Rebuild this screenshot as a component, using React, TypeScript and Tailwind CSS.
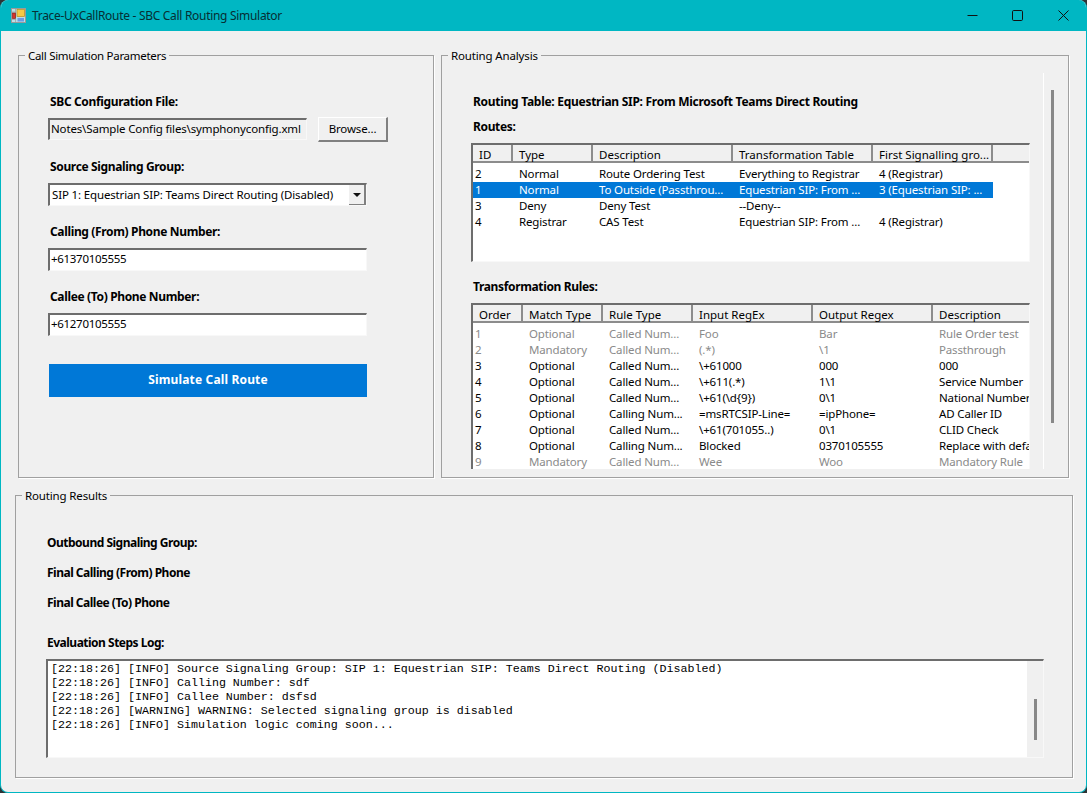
import React from 'react';

const sunken = 'border-t-2 border-l-2 border-b border-r border-t-[#6d6d6d] border-l-[#6d6d6d] border-b-[#f8f8f8] border-r-[#f8f8f8]';
const routeCols = ['w-[40px]', 'w-[80px]', 'w-[140px]', 'w-[140px]', 'w-[120px]'];
const ruleCols = ['w-[50px]', 'w-[80px]', 'w-[90px]', 'w-[120px]', 'w-[120px]', 'w-[120px]'];

const routes = [
  ['2', 'Normal', 'Route Ordering Test', 'Everything to Registrar', '4 (Registrar)'],
  ['1', 'Normal', 'To Outside (Passthrou...', 'Equestrian SIP: From ...', '3 (Equestrian SIP: ...'],
  ['3', 'Deny', 'Deny Test', '--Deny--', ''],
  ['4', 'Registrar', 'CAS Test', 'Equestrian SIP: From ...', '4 (Registrar)'],
];

const rules = [
  ['1', 'Optional', 'Called Num...', 'Foo', 'Bar', 'Rule Order test'],
  ['2', 'Mandatory', 'Called Num...', '(.*)', '\\1', 'Passthrough'],
  ['3', 'Optional', 'Called Num...', '\\+61000', '000', '000'],
  ['4', 'Optional', 'Called Num...', '\\+611(.*)', '1\\1', 'Service Number'],
  ['5', 'Optional', 'Called Num...', '\\+61(\\d{9})', '0\\1', 'National Number'],
  ['6', 'Optional', 'Calling Num...', '=msRTCSIP-Line=', '=ipPhone=', 'AD Caller ID'],
  ['7', 'Optional', 'Called Num...', '\\+61(701055..)', '0\\1', 'CLID Check'],
  ['8', 'Optional', 'Calling Num...', 'Blocked', '0370105555', 'Replace with default'],
  ['9', 'Mandatory', 'Called Num...', 'Wee', 'Woo', 'Mandatory Rule'],
];

const logLines = [
  '[22:18:26] [INFO] Source Signaling Group: SIP 1: Equestrian SIP: Teams Direct Routing (Disabled)',
  '[22:18:26] [INFO] Calling Number: sdf',
  '[22:18:26] [INFO] Callee Number: dsfsd',
  '[22:18:26] [WARNING] WARNING: Selected signaling group is disabled',
  '[22:18:26] [INFO] Simulation logic coming soon...',
];

const GroupBox = ({ title, titleClass = '', className, children }: { title: string; titleClass?: string; className: string; children: React.ReactNode }) => (
  <div className={`relative border border-[#a0a0a0] shadow-[1px_1px_0_#ffffff] ${className}`}>
    <span className={`absolute -top-[8px] left-[6px] h-4 bg-[#f0f0f0] px-[3px] leading-4 whitespace-nowrap ${titleClass}`}>{title}</span>
    {children}
  </div>
);

const Label = ({ children, className = 'tracking-[-0.35px]' }: { children: React.ReactNode; className?: string }) => (
  <div className={`h-4 text-[12px] font-bold leading-4 whitespace-nowrap ${className}`}>{children}</div>
);

const HeaderRow = ({ labels, cols }: { labels: string[]; cols: string[] }) => (
  <div className="flex h-[18px] w-max bg-[#f0f0f0]">
    {labels.map((label, index) => (
      <div
        key={label}
        className={`${cols[index]} h-[18px] shrink-0 overflow-x-clip border-r-2 border-b-2 border-r-[#8c8c8c] border-b-[#8c8c8c] pl-[6px] leading-[19px] tracking-normal whitespace-nowrap`}
      >
        {label}
      </div>
    ))}
  </div>
);

const Row = ({ cells, cols, selected, muted }: { cells: string[]; cols: string[]; selected?: boolean; muted?: boolean }) => (
  <div className={`flex h-4 w-max ${selected ? 'bg-[#0078d7] text-white' : ''} ${muted ? 'text-[#8a8a8a]' : ''}`}>
    {cells.map((cell, index) => (
      <div
        key={index}
        className={`${cols[index]} shrink-0 overflow-hidden leading-4 whitespace-nowrap ${index === 0 ? 'pl-[2px]' : 'pl-[6px]'}`}
      >
        {cell}
      </div>
    ))}
  </div>
);

const AppIcon = () => (
  <svg width="15" height="15" viewBox="0 0 15 15" className="shrink-0">
    <rect x="0.5" y="0.5" width="14" height="14" fill="#bcdfe6" stroke="#9a9a9a" />
    <path d="M0.5 4h4M4.5 0.5v14M0.5 11.5h4" stroke="#9a9a9a" strokeWidth="0.7" fill="none" />
    <rect x="6" y="1.5" width="7.5" height="7" fill="#f6c945" stroke="#b98a1a" strokeWidth="0.7" />
    <rect x="1.5" y="5" width="3" height="5.5" fill="#d8322a" stroke="#7a1a14" strokeWidth="0.6" />
    <rect x="6.5" y="10" width="6.5" height="3.5" fill="#6a9be6" />
  </svg>
);

export default function App() {
  return (
    <div className="h-[793px] w-[1087px] overflow-hidden bg-[#2e3436] font-['Noto_Sans',sans-serif] text-[11.5px] tracking-[-0.15px] text-black">
      <div className="flex h-full flex-col overflow-hidden rounded-[8px] border-r border-b border-l border-[#00b7c3] bg-[#f0f0f0]">
        {/* Title bar */}
        <div className="flex h-[31px] shrink-0 items-center bg-[#00b7c3] pl-[10px]">
          <AppIcon />
          <span className="ml-[6px] text-[12px] tracking-[-0.3px] text-[#062f33]">Trace-UxCallRoute - SBC Call Routing Simulator</span>
          <div className="ml-auto flex">
            <div className="flex h-[31px] w-[45px] items-center justify-center">
              <svg width="11" height="11" viewBox="0 0 11 11"><path d="M0.5 5.5h10" stroke="#111" strokeWidth="1" fill="none" /></svg>
            </div>
            <div className="flex h-[31px] w-[45px] items-center justify-center">
              <svg width="11" height="11" viewBox="0 0 11 11"><rect x="0.5" y="0.5" width="10" height="10" rx="1.2" stroke="#111" fill="none" /></svg>
            </div>
            <div className="flex h-[31px] w-[46px] items-center justify-center">
              <svg width="11" height="11" viewBox="0 0 11 11"><path d="M0.5 0.5l10 10M10.5 0.5l-10 10" stroke="#111" fill="none" /></svg>
            </div>
          </div>
        </div>

        <div className="flex flex-col pt-[24px]">
          <div className="flex">
            {/* Call Simulation Parameters */}
            <GroupBox title="Call Simulation Parameters" titleClass="tracking-[-0.3px]" className="ml-[17px] h-[423px] w-[416px] pt-[38px] pl-[29px]">
              <div className="ml-[2px]"><Label>SBC Configuration File:</Label></div>
              <div className="mt-[8px] flex h-[22px] items-center">
                <div className={`${sunken} h-[22px] w-[259px] overflow-hidden bg-[#f0f0f0] pl-px leading-[18px] whitespace-nowrap`}>
                  Notes\Sample Config files\symphonyconfig.xml
                </div>
                <button className="ml-[11px] h-[25px] w-[70px] border-t border-l border-r-2 border-b-2 border-t-white border-l-white border-r-[#808080] border-b-[#808080] bg-[#f0f0f0] pt-px">
                  Browse...
                </button>
              </div>

              <div className="mt-[19px] ml-[2px]"><Label>Source Signaling Group:</Label></div>
              <div className={`${sunken} mt-[8px] flex h-[23px] w-[319px] bg-white pl-[2px]`}>
                <span className="flex-1 leading-[20px] whitespace-nowrap">SIP 1: Equestrian SIP: Teams Direct Routing (Disabled)</span>
                <div className="flex h-[20px] w-[17px] items-center justify-center border-r-2 border-b border-r-[#808080] border-b-[#808080] bg-[#f0f0f0]">
                  <svg width="8" height="4" viewBox="0 0 8 4"><path d="M0 0h8L4 4z" fill="#111" /></svg>
                </div>
              </div>

              <div className="mt-[18px] ml-[2px]"><Label>Calling (From) Phone Number:</Label></div>
              <div className={`${sunken} mt-[8px] h-[23px] w-[319px] bg-white pl-px leading-[18px] tracking-[-0.3px]`}>+61370105555</div>

              <div className="mt-[18px] ml-[2px]"><Label>Callee (To) Phone Number:</Label></div>
              <div className={`${sunken} mt-[8px] h-[23px] w-[319px] bg-white pl-px leading-[18px] tracking-[-0.3px]`}>+61270105555</div>

              <button className="mt-[28px] ml-px h-[33px] w-[318px] bg-[#0078d7] pb-[2px] text-[12px] font-bold tracking-[0.15px] text-white">Simulate Call Route</button>
            </GroupBox>

            {/* Routing Analysis */}
            <GroupBox title="Routing Analysis" className="ml-[7px] flex h-[423px] w-[628px] pt-[17px] pl-px">
              <div className="h-[396px] w-[601px] overflow-hidden border-r border-r-white pt-[21px] pl-[28px]">
                <div className="ml-[2px]"><Label className="tracking-[-0.28px]">Routing Table: Equestrian SIP: From Microsoft Teams Direct Routing</Label></div>
                <div className="mt-[9px] ml-[2px]"><Label>Routes:</Label></div>
                <div className={`${sunken} mt-[8px] h-[119px] w-[559px] overflow-hidden bg-white`}>
                  <div className="flex bg-[#f0f0f0]">
                    <HeaderRow labels={['ID', 'Type', 'Description', 'Transformation Table', 'First Signalling gro...']} cols={routeCols} />
                    <div className="h-[18px] flex-1 border-b-2 border-b-[#8c8c8c]" />
                  </div>
                  <div className="pt-[3px]">
                    {routes.map((row) => (
                      <Row key={row[0]} cells={row} cols={routeCols} selected={row[0] === '1'} />
                    ))}
                  </div>
                </div>
                <div className="mt-[17px] ml-[2px]"><Label>Transformation Rules:</Label></div>
                <div className={`${sunken} mt-[8px] h-[180px] w-[559px] overflow-hidden bg-white`}>
                  <HeaderRow labels={['Order', 'Match Type', 'Rule Type', 'Input RegEx', 'Output Regex', 'Description']} cols={ruleCols} />
                  <div className="pt-[3px]">
                    {rules.map((row) => (
                      <Row key={row[0]} cells={row} cols={ruleCols} muted={['1', '2', '9'].includes(row[0])} />
                    ))}
                  </div>
                </div>
              </div>
              <div className="mt-[17px] ml-[7px] h-[333px] w-[3px] bg-[#888888]" />
            </GroupBox>
          </div>

          {/* Routing Results */}
          <GroupBox title="Routing Results" className="mt-[17px] ml-[14px] h-[283px] w-[1058px] pt-[39px] pl-[30px]">
            <div className="ml-px"><Label className="tracking-[-0.5px]">Outbound Signaling Group:</Label></div>
            <div className="mt-[14px] ml-px"><Label className="tracking-[-0.5px]">Final Calling (From) Phone</Label></div>
            <div className="mt-[14px] ml-px"><Label className="tracking-[-0.5px]">Final Callee (To) Phone</Label></div>
            <div className="mt-[24px] ml-px"><Label className="tracking-[-0.5px]">Evaluation Steps Log:</Label></div>
            <div className={`${sunken} mt-[8px] flex h-[99px] w-[998px]`}>
              <div className="flex-1 bg-white pt-px pl-[3px] font-['Liberation_Mono',monospace] text-[11.67px] leading-[14px] tracking-normal">
                {logLines.map((line) => (
                  <div key={line} className="whitespace-pre">{line}</div>
                ))}
              </div>
              <div className="w-[16px] bg-[#f0f0f0] pt-[38px] pl-[7px]">
                <div className="h-[41px] w-[3px] bg-[#888888]" />
              </div>
            </div>
          </GroupBox>
        </div>
      </div>
    </div>
  );
}
